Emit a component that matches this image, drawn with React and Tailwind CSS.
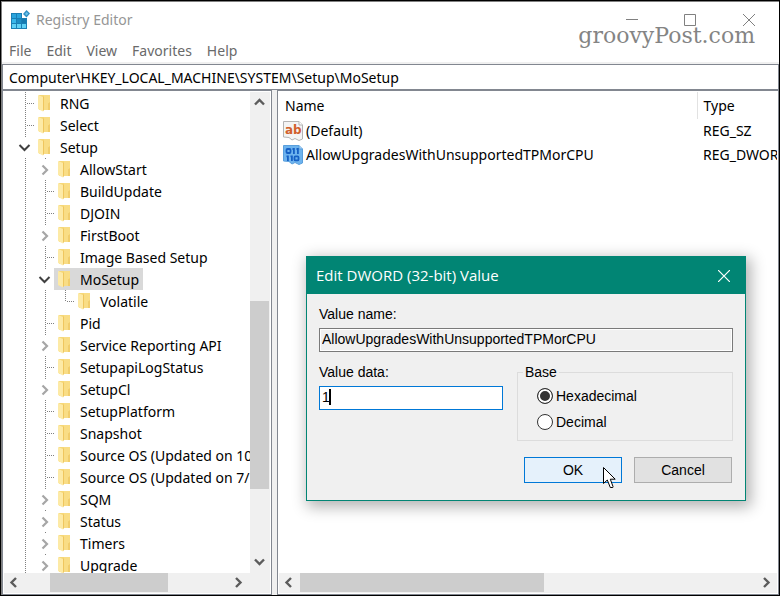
import React from "react";

const TREE = [
  { label: "RNG", level: 0 },
  { label: "Select", level: 0 },
  { label: "Setup", level: 0, state: "open" },
  { label: "AllowStart", level: 1, state: "closed" },
  { label: "BuildUpdate", level: 1 },
  { label: "DJOIN", level: 1 },
  { label: "FirstBoot", level: 1, state: "closed" },
  { label: "Image Based Setup", level: 1 },
  { label: "MoSetup", level: 1, state: "open", selected: true },
  { label: "Volatile", level: 2, last: true },
  { label: "Pid", level: 1 },
  { label: "Service Reporting API", level: 1, state: "closed" },
  { label: "SetupapiLogStatus", level: 1 },
  { label: "SetupCl", level: 1, state: "closed" },
  { label: "SetupPlatform", level: 1 },
  { label: "Snapshot", level: 1 },
  { label: "Source OS (Updated on 10", level: 1 },
  { label: "Source OS (Updated on 7/", level: 1 },
  { label: "SQM", level: 1, state: "closed" },
  { label: "Status", level: 1, state: "closed" },
  { label: "Timers", level: 1, state: "closed" },
  { label: "Upgrade", level: 1, state: "closed" },
];

const MENU = ["File", "Edit", "View", "Favorites", "Help"];

const ARROWS = {
  up: "M5 12.5 9.5 8 14 12.5",
  down: "M5 6.5 9.5 11 14 6.5",
  left: "M12 5 7.5 9.5 12 14",
  right: "M7 5 11.5 9.5 7 14",
};

function ScrollButton({ dir }) {
  return (
    <button type="button" aria-label={"Scroll " + dir} className="size-5 shrink-0">
      <svg width="20" height="20" fill="none" stroke="#5c5c5c" strokeWidth="2.4">
        <path d={ARROWS[dir]} />
      </svg>
    </button>
  );
}

function RegeditIcon() {
  return (
    <svg width="20" height="20" viewBox="0 0 20 20" className="shrink-0">
      <rect x="1" y="3" width="16" height="16" fill="#1a7fb5" />
      <g fill="#5fd0f5">
        <rect x="2" y="4" width="4" height="4" fill="#2aa4dc" />
        <rect x="7" y="4" width="4" height="4" fill="#2aa4dc" />
        <rect x="2" y="9" width="4" height="4" fill="#38b6ea" />
        <rect x="7" y="9" width="4" height="4" fill="#1c8cc4" />
        <rect x="12" y="9" width="4" height="4" fill="#167ab0" />
        <rect x="2" y="14" width="4" height="4" />
        <rect x="7" y="14" width="4" height="4" />
        <rect x="12" y="14" width="4" height="4" />
      </g>
      <rect x="12" y="2" width="6" height="6" fill="#fff" />
      <path d="M16.500 0 20 3.500 16.500 7.500 13 4Z" fill="#2f8fc4" />
      <path d="M16.600 2 18.200 3.600 16.700 5.400 15 4Z" fill="#6cc4ea" />
    </svg>
  );
}

function Folder() {
  return (
    <svg width="13" height="18" viewBox="0 0 13 18" className="shrink-0">
      <path d="M1 1H12V16H1Z" fill="#f6d878" />
      <path d="M6 1H12V9L10 11V16H5Z" fill="#f9dd85" />
      <path d="M0 1 5 3V17.500L0 15Z" fill="#fdeaa6" />
      <path d="M5 3 6 2V16L5 17.500Z" fill="#efc65e" />
      <path d="M10 9.500 12 8V16H10Z" fill="#f1cd6c" />
    </svg>
  );
}

function Guide({ kind }) {
  return (
    <svg width="20" height="22" className="shrink-0" shapeRendering="crispEdges" stroke="#808080" fill="none">
      {kind === "line" && <path d="M11.500 0V22" strokeDasharray="1 1" />}
      {kind === "tee" && <path d="M11.500 0V22M13 11.500H20" strokeDasharray="1 1" />}
      {kind === "corner" && <path d="M11.500 0V12M13 11.500H20" strokeDasharray="1 1" />}
      {(kind === "open" || kind === "closed") && <path d="M11.500 0V1" />}
      {kind === "open" && (
        <path d="M5.500 9 10.500 14 15.500 9" stroke="#404040" strokeWidth="2" shapeRendering="auto" />
      )}
      {kind === "closed" && (
        <path d="M8.500 7.500 13 12 8.500 16.500" stroke="#a6a6a6" strokeWidth="2.200" shapeRendering="auto" />
      )}
    </svg>
  );
}

function TreeRow({ item }) {
  const kind = item.state || (item.last ? "corner" : "tee");
  const parents = [];
  for (let i = 0; i < item.level; i++) parents.push(i);
  return (
    <li
      role="treeitem"
      aria-level={item.level + 1}
      aria-selected={!!item.selected}
      className="flex h-[22px] shrink-0 items-center whitespace-nowrap"
    >
      {parents.map((p) => (
        <Guide key={p} kind="line" />
      ))}
      <Guide kind={kind} />
      <span className={"flex h-full items-center gap-[9px] px-1 " + (item.selected ? "bg-[#d9d9d9]" : "")}>
        <Folder />
        <span className="pt-0.5">{item.label}</span>
      </span>
    </li>
  );
}

function StringIcon() {
  return (
    <svg width="20" height="20" viewBox="0 0 20 20" className="shrink-0">
      <path d="M.5.5H16L19.500 4V18L16 19.500 12 17.500 9 19 6 16.500 .5 16Z" fill="#f4f4f4" stroke="#b4b4b4" />
      <path d="M16 .5V4H19.500" fill="#fff" stroke="#b4b4b4" />
      <text x="2" y="13" fontSize="12" fontWeight="700" fill="#d2602c" fontFamily="DejaVu Sans, sans-serif">
        ab
      </text>
    </svg>
  );
}

function BinaryIcon() {
  return (
    <svg width="20" height="20" viewBox="0 0 20 20" className="shrink-0">
      <path d="M.5.5H16L19.500 4V18L16 19.500 12 17.500 9 19 6 16.500 .5 16Z" fill="#6db3ee" stroke="#5a9fdc" />
      <path d="M16 .5V4H19.500" fill="#a9d2f5" stroke="#5a9fdc" />
      <g fill="none" stroke="#1560c4" strokeWidth="1.800">
        <rect x="3.500" y="4" width="4" height="4" rx="1" />
        <path d="M10.900 3V9M14.900 3V9M9.500 4H11M13.500 4H15" />
        <path d="M4.900 10.500V16M8.900 10.500V16M3.500 11.400H5M7.500 11.400H9" />
        <rect x="11.500" y="11.400" width="4" height="4" rx="1" />
      </g>
    </svg>
  );
}

function Window({ children }) {
  return (
    <div className="relative h-screen overflow-hidden border border-black bg-white font-['Segoe_UI','Noto_Sans',sans-serif] text-sm text-black">
      <div className="flex h-full flex-col border-t border-l border-[#808080]">{children}</div>
    </div>
  );
}

function TitleBar() {
  return (
    <header>
      <div className="flex h-9 items-center justify-between pl-2">
        <div className="flex items-center gap-1.5 text-[#969696]">
          <RegeditIcon />
          <h1>Registry Editor</h1>
        </div>
        <div className="flex h-full">
          <button type="button" aria-label="Minimize" className="flex w-[58px] items-center justify-center">
            <svg width="12" height="12" stroke="#808080" fill="none"><path d="M0 5.500H12" /></svg>
          </button>
          <button type="button" aria-label="Maximize" className="flex w-[58px] items-center justify-center">
            <svg width="12" height="12" stroke="#808080" fill="none"><path d="M.5.5H11.500V11.500H.5Z" /></svg>
          </button>
          <button type="button" aria-label="Close" className="flex w-[60px] items-center justify-center">
            <svg width="12" height="12" stroke="#808080" fill="none"><path d="M0 0 12 12M12 0 0 12" /></svg>
          </button>
        </div>
      </div>
      <nav className="flex h-6 items-center gap-[15px] px-[7px] pt-0.5 text-[#6a6a6a]">
        {MENU.map((m) => (
          <button type="button" key={m}>{m}</button>
        ))}
      </nav>
      <div className="h-0.5 bg-[#f0f0f0]" />
      <input
        aria-label="Address"
        defaultValue="Computer\HKEY_LOCAL_MACHINE\SYSTEM\Setup\MoSetup"
        className="block h-[26px] w-full border border-[#828790] px-1.5 outline-none"
      />
    </header>
  );
}

function TreePane() {
  return (
    <section className="flex w-[270px] shrink-0 flex-col border border-[#828790] p-px">
      <div className="flex min-h-0 flex-1">
        <ul role="tree" aria-label="Registry keys" className="min-w-0 flex-1 overflow-hidden pl-2.5">
          {TREE.map((item) => (
            <TreeRow key={item.label} item={item} />
          ))}
        </ul>
        <div className="flex w-5 shrink-0 flex-col bg-[#f0f0f0]">
          <ScrollButton dir="up" />
          <div className="flex flex-1 flex-col">
            <div className="flex-[189]" />
            <div className="mr-px flex-[188] bg-[#cdcdcd]" />
            <div className="flex-[64]" />
          </div>
          <ScrollButton dir="down" />
        </div>
      </div>
      <div className="flex h-5 shrink-0 bg-[#f0f0f0] pr-[21px]">
        <ScrollButton dir="left" />
        <div className="flex flex-1 pb-px">
          <div className="flex-[26]" />
          <div className="flex-[118] bg-[#cdcdcd]" />
          <div className="flex-[61]" />
        </div>
        <ScrollButton dir="right" />
      </div>
    </section>
  );
}

function ValuesPane() {
  return (
    <section className="flex min-w-0 flex-1 flex-col border border-[#828790] p-px">
      <div className="min-h-0 flex-1 overflow-hidden">
        <table className="w-[640px] table-fixed border-collapse text-left whitespace-nowrap">
          <thead>
            <tr className="h-[27px]">
              <th className="w-[418px] border-r border-[#e2e2e2] p-0 pl-1.5 font-normal">Name</th>
              <th className="p-0 pl-1.5 font-normal">Type</th>
            </tr>
          </thead>
          <tbody>
            <tr className="h-6">
              <td className="p-0 pl-1">
                <div className="flex items-center gap-[3px]"><StringIcon />(Default)</div>
              </td>
              <td className="p-0 pl-1.5">REG_SZ</td>
            </tr>
            <tr className="h-6">
              <td className="p-0 pl-1">
                <div className="flex items-center gap-[3px]"><BinaryIcon />AllowUpgradesWithUnsupportedTPMorCPU</div>
              </td>
              <td className="p-0 pl-1.5">REG_DWORD</td>
            </tr>
          </tbody>
        </table>
      </div>
      <div className="flex h-5 shrink-0 bg-[#f0f0f0]">
        <ScrollButton dir="left" />
        <div className="flex flex-1 pb-px pl-px">
          <div className="flex-[244] bg-[#cdcdcd]" />
          <div className="flex-[213]" />
        </div>
        <ScrollButton dir="right" />
      </div>
    </section>
  );
}

function Radio({ id, label, checked }) {
  return (
    <div className="flex h-[26px] items-center gap-[3px]">
      <input
        type="radio"
        name="base"
        id={id}
        defaultChecked={checked}
        className="size-4 appearance-none rounded-full border border-[#333] bg-white checked:bg-[#333] checked:shadow-[inset_0_0_0_2px_#fff]"
      />
      <label htmlFor={id}>{label}</label>
    </div>
  );
}

function EditDialog() {
  return (
    <div
      role="dialog"
      aria-labelledby="dialog-title"
      className="absolute top-[255px] left-[305px] w-[440px] border border-[#018574] bg-[#f0f0f0] shadow-[3px_4px_14px_2px_rgba(0,0,0,0.3)]"
    >
      <div className="flex h-[37px] items-center justify-between bg-[#018574] pr-[15px] pl-[9px] text-white">
        <h2 id="dialog-title" className="font-['Segoe_UI','Open_Sans',sans-serif] text-[15px]">Edit DWORD (32-bit) Value</h2>
        <button type="button" aria-label="Close">
          <svg width="12" height="12" stroke="#fff" strokeWidth="1.200" fill="none"><path d="M0 0 12 12M12 0 0 12" /></svg>
        </button>
      </div>
      <form className="px-3 pt-3 pb-[17px] font-['Liberation_Sans',Arial,sans-serif] text-sm">
        <label htmlFor="value-name" className="block h-[22px] leading-4">Value name:</label>
        <input
          id="value-name"
          readOnly
          defaultValue="AllowUpgradesWithUnsupportedTPMorCPU"
          className="block h-6 w-full border border-[#7a7a7a] bg-[#f0f0f0] px-0.5 pb-0.5 shadow-[inset_0_0_0_1px_#fff] outline-none"
        />
        <div className="flex gap-3.5 pt-3">
          <div className="w-[184px]">
            <label htmlFor="value-data" className="block h-[22px] leading-4">Value data:</label>
            <div className="relative">
              <input
                id="value-data"
                defaultValue="1"
                className="block h-6 w-full border border-[#0078d7] bg-white px-0.5 pb-0.5 outline-none"
              />
              <span className="absolute top-[3px] left-2.5 h-4 w-0.5 bg-black" />
            </div>
          </div>
          <fieldset className="h-[77px] flex-1 border border-[#dcdcdc] px-[19px]">
            <legend className="-ml-3.5 px-0.5 leading-4">Base</legend>
            <div className="pt-[3px]">
              <Radio id="hex" label="Hexadecimal" checked />
              <Radio id="dec" label="Decimal" />
            </div>
          </fieldset>
        </div>
        <div className="flex justify-end gap-3 pt-4 pr-px">
          <button type="button" className="h-[26px] w-[98px] border border-[#0078d7] bg-[#e5f1fb]">OK</button>
          <button type="button" className="h-[26px] w-[98px] border border-[#adadad] bg-[#e1e1e1]">Cancel</button>
        </div>
      </form>
      <svg width="14" height="22" viewBox="0 0 14 22" className="absolute top-[210px] left-[296px]">
        <path d="M.5.5V16.500L4.300 13 7.300 20.500H9.800L10 19.500 7.300 12.200H12.200Z" fill="#fff" stroke="#000" />
      </svg>
    </div>
  );
}

export default function App() {
  return (
    <Window>
      <TitleBar />
      <main className="flex min-h-0 flex-1 bg-[#f0f0f0] [&>section]:bg-white">
        <TreePane />
        <div className="w-[5px] shrink-0" />
        <ValuesPane />
      </main>
      <div className="pointer-events-none absolute top-[21px] right-6 font-['Century_Schoolbook','DejaVu_Serif',serif] text-[22px] leading-7 text-[#848484]">
        groovyPost.com
      </div>
      <EditDialog />
    </Window>
  );
}
